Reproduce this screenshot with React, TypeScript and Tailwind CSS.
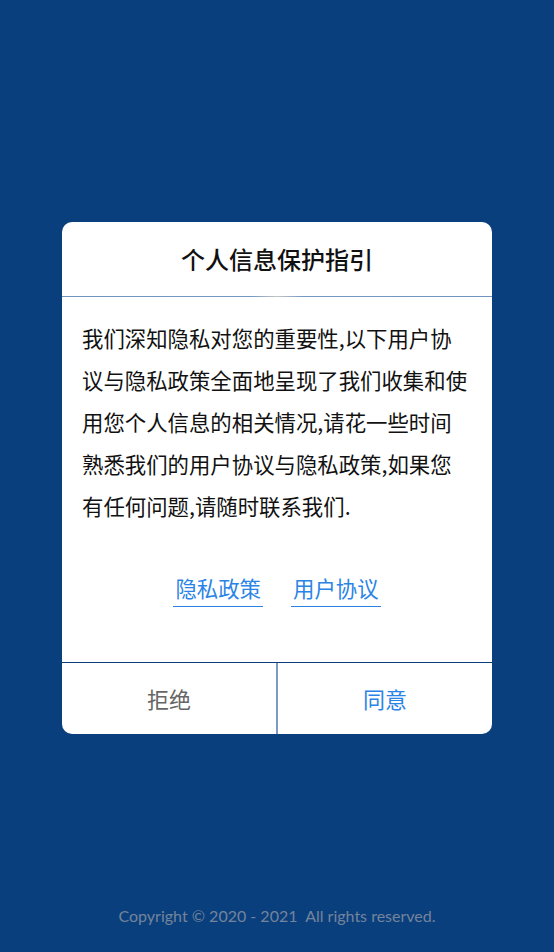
import React from "react";

const cjk = "font-['Noto_Sans_CJK_SC',sans-serif]";

const App: React.FC = () => {
  return (
    <div className={`flex h-[952px] w-full flex-col items-center bg-[#0a3f7e] ${cjk}`}>
      <div className="mt-[222px] w-[430px] overflow-hidden rounded-[10px] bg-white">
        <div className="flex h-[74px] items-center justify-center text-[24px] font-medium text-[#111]">
          个人信息保护指引
        </div>
        <div className="h-px bg-[linear-gradient(90deg,#6f95bf_0%,#7399c2_44%,#c4c4c4_50%,#7399c2_56%,#6f95bf_100%)]" />
        <div className="px-5 pt-5">
          <p className="text-[21.4px] leading-[42px] text-[#111]">
            我们深知隐私对您的重要性,以下用户协议与隐私政策全面地呈现了我们收集和使用您个人信息的相关情况,请花一些时间熟悉我们的用户协议与隐私政策,如果您有任何问题,请随时联系我们.
          </p>
          <div className="mt-[47px] mb-[55px] flex justify-center gap-[28px]">
            <a className="border-b border-[#2a84e6] px-[2px] pb-[4px] text-[21.4px] leading-[28px] text-[#2a84e6]">
              隐私政策
            </a>
            <a className="border-b border-[#2a84e6] px-[2px] pb-[4px] text-[21.4px] leading-[28px] text-[#2a84e6]">
              用户协议
            </a>
          </div>
        </div>
        <div className="flex h-[72px] border-t border-[#0a3f7e]">
          <button className="flex-1 text-[22px] text-[#666]">拒绝</button>
          <div className="w-[2px] bg-[#7b9cc0]" />
          <button className="flex-1 text-[22px] text-[#2a84e6]">同意</button>
        </div>
      </div>
      <div className="mt-auto mb-[24px] font-['Lato',sans-serif] text-[16px] leading-[24px] text-[#74849a]">
        Copyright © 2020 - 2021&nbsp; All rights reserved.
      </div>
    </div>
  );
};

export default App;
